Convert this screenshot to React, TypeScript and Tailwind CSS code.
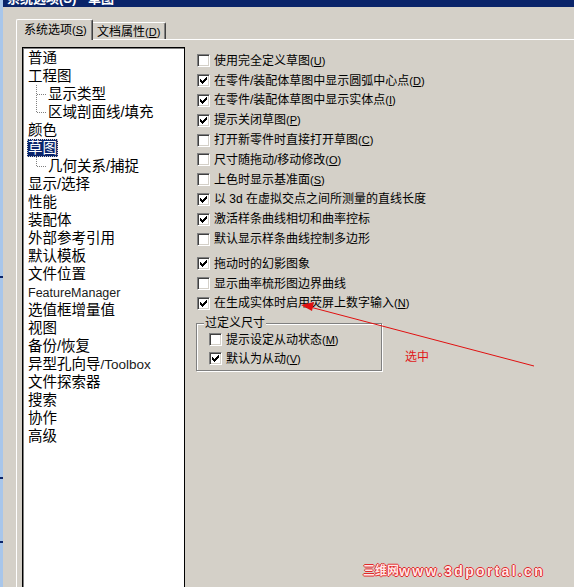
import React from 'react';

const FONT = "font-['Liberation_Sans','Noto_Sans_CJK_SC',sans-serif]";

type TreeItem = { label: string; child?: 'mid' | 'last'; selected?: boolean; latin?: string };

const tree: TreeItem[] = [
  { label: '普通' },
  { label: '工程图' },
  { label: '显示类型', child: 'mid' },
  { label: '区域剖面线/填充', child: 'last' },
  { label: '颜色' },
  { label: '草图', selected: true },
  { label: '几何关系/捕捉', child: 'last' },
  { label: '显示/选择' },
  { label: '性能' },
  { label: '装配体' },
  { label: '外部参考引用' },
  { label: '默认模板' },
  { label: '文件位置' },
  { label: '', latin: 'FeatureManager' },
  { label: '选值框增量值' },
  { label: '视图' },
  { label: '备份/恢复' },
  { label: '异型孔向导', latin: '/Toolbox' },
  { label: '文件探索器' },
  { label: '搜索' },
  { label: '协作' },
  { label: '高级' },
];

type Opt = { t: string; k?: string; c: boolean };

const opts: Opt[] = [
  { t: '使用完全定义草图', k: 'U', c: false },
  { t: '在零件/装配体草图中显示圆弧中心点', k: 'D', c: true },
  { t: '在零件/装配体草图中显示实体点', k: 'I', c: true },
  { t: '提示关闭草图', k: 'P', c: true },
  { t: '打开新零件时直接打开草图', k: 'C', c: false },
  { t: '尺寸随拖动/移动修改', k: 'O', c: false },
  { t: '上色时显示基准面', k: 'S', c: false },
  { t: '以 3d 在虚拟交点之间所测量的直线长度', c: true },
  { t: '激活样条曲线相切和曲率控标', c: true },
  { t: '默认显示样条曲线控制多边形', c: false },
];

const opts2: Opt[] = [
  { t: '拖动时的幻影图象', c: true },
  { t: '显示曲率梳形图边界曲线', c: false },
  { t: '在生成实体时启用荧屏上数字输入', k: 'N', c: true },
];

// classic 7x7 pixel check mark
const tick = [
  [6, 0, 1], [5, 1, 2], [0, 2, 1], [4, 2, 3], [0, 3, 2], [3, 3, 3], [0, 4, 5], [1, 5, 3], [2, 6, 1],
];

function CheckBox({ checked }: { checked: boolean }) {
  return (
    <span className="flex h-[13px] w-[13px] shrink-0 items-center justify-center border border-t-[#808080] border-l-[#808080] border-r-white border-b-white bg-white shadow-[inset_1px_1px_0_#404040,inset_-1px_-1px_0_#d4d0c8]">
      {checked && (
        <svg width="7" height="7" viewBox="0 0 7 7" shapeRendering="crispEdges">
          {tick.map(([x, y, w]) => (
            <rect key={`${x}-${y}`} x={x} y={y} width={w} height={1} fill="#000" />
          ))}
        </svg>
      )}
    </span>
  );
}

function Label({ t, k }: { t: string; k?: string }) {
  return (
    <span className="whitespace-nowrap text-[12px] leading-[14px] text-black">
      {t}
      {k && (
        <span className="text-[11px]">
          (<span className="underline underline-offset-1">{k}</span>)
        </span>
      )}
    </span>
  );
}

function OptRow({ o }: { o: Opt }) {
  return (
    <div className="flex h-[19.8px] items-center gap-[4px]">
      <CheckBox checked={o.c} />
      <Label t={o.t} k={o.k} />
    </div>
  );
}

function TreeRow({ item }: { item: TreeItem }) {
  const text = (
    <span
      className={`px-px leading-[18px] ${
        item.selected ? 'bg-[#0a246a] text-white outline-1 outline-dotted outline-[#d4d0c8] -outline-offset-1' : 'text-black'
      }`}
    >
      {item.label}
      {item.latin && (
        <span className={item.label ? 'text-[13.5px] text-[#1a1a1a]' : 'text-[12.5px] text-[#1a1a1a]'}>
          {item.latin}
        </span>
      )}
    </span>
  );
  if (item.child) {
    return (
      <div className="flex h-[18px] items-center pl-[12px]">
        <svg width="11" height="18" viewBox="0 0 11 18" className="shrink-0">
          <line
            x1="0.5"
            y1="0"
            x2="0.5"
            y2={item.child === 'mid' ? 18 : 9}
            stroke="#808080"
            strokeDasharray="1 1"
          />
          <line x1="1" y1="9.5" x2="10" y2="9.5" stroke="#808080" strokeDasharray="1 1" />
        </svg>
        {text}
      </div>
    );
  }
  return <div className="flex h-[18px] items-center pl-[3px]">{text}</div>;
}

export default function App() {
  return (
    <div className={`relative flex h-[587px] w-[574px] overflow-hidden bg-[#d4d0c8] ${FONT}`}>
      {/* strip of the window behind */}
      <div className="relative h-full w-[3px] shrink-0 bg-[#a8c6ea]">
        <div className="absolute left-0 top-[276px] h-[2px] w-[3px] bg-[#0a246a]" />
        <div className="absolute left-0 top-[477px] h-[2px] w-[3px] bg-[#0a246a]" />
        <div className="absolute left-0 top-[541px] h-[2px] w-[3px] bg-[#0a246a]" />
      </div>

      <div className="flex min-w-0 flex-1 flex-col">
        {/* title bar, mostly cut off */}
        <div className="h-[7px] shrink-0 overflow-hidden bg-[#0a246a] pl-[4px]">
          <div className="-mt-[8px] whitespace-nowrap text-[13px] font-bold leading-[13px] text-white">
            系统选项(S) - 草图
          </div>
        </div>

        {/* tabs */}
        <div className="mt-[12px] flex h-[20px] shrink-0 items-end pl-[13px]">
          <div className="relative z-10 -mb-px flex h-[21px] w-[77px] items-start rounded-t-[2px] border-l border-t border-r border-l-white border-t-white border-r-[#404040] bg-[#d4d0c8] pl-[7px] pt-[3px] shadow-[inset_-1px_0_0_#808080]">
            <Label t="系统选项" k="S" />
          </div>
          <div className="flex h-[17px] w-[73px] items-start rounded-tr-[2px] border-t border-r border-t-white border-r-[#404040] pl-[4px] pt-[2px] shadow-[inset_-1px_0_0_#808080]">
            <Label t="文档属性" k="D" />
          </div>
        </div>

        {/* tab sheet */}
        <div className="ml-[13px] flex flex-1 border-l border-t border-white pl-[5px] pt-[7px]">
          {/* tree list */}
          <div className="h-[560px] w-[163px] shrink-0 border border-black bg-white pt-px shadow-[inset_1px_1px_0_#808080]">
            <div className="pl-px text-[14.5px]">
              {tree.map((item, i) => (
                <TreeRow key={i} item={item} />
              ))}
            </div>
          </div>

          {/* options */}
          <div className="ml-[12px] flex flex-col pt-[4px]">
            {opts.map((o) => (
              <OptRow key={o.t} o={o} />
            ))}
            <div className="mt-[5px]">
              {opts2.map((o) => (
                <OptRow key={o.t} o={o} />
              ))}
            </div>

            <fieldset className="-ml-px mt-[3px] w-[186px] border border-[#808080] pb-[2px] shadow-[1px_1px_0_#fff,inset_1px_1px_0_#fff]">
              <legend className="ml-[7px] bg-[#d4d0c8] px-px text-[12px] leading-[14px] text-black">
                过定义尺寸
              </legend>
              <div className="pl-[12px]">
                <div className="flex h-[19px] items-center gap-[4px]">
                  <CheckBox checked={false} />
                  <Label t="提示设定从动状态" k="M" />
                </div>
                <div className="flex h-[19px] items-center gap-[4px]">
                  <CheckBox checked />
                  <Label t="默认为从动" k="V" />
                </div>
              </div>
            </fieldset>
          </div>
        </div>
      </div>

      {/* red annotation drawn over the dialog */}
      <svg className="pointer-events-none absolute left-0 top-0" width="574" height="587" viewBox="0 0 574 587">
        <line x1="534" y1="366" x2="310" y2="307" stroke="#e01010" strokeWidth="1" />
        <polygon points="301,305 314,302 312,311" fill="#e01010" />
      </svg>
      <div className="absolute left-[405px] top-[350px] text-[12px] leading-[14px] text-[#e01818]">选中</div>

      {/* site watermark */}
      <div className="absolute left-[363px] top-[563px] flex items-center whitespace-nowrap font-bold leading-[16px] text-[#ffe8e8] [text-shadow:1px_0_0_#e02828,-1px_0_0_#e02828,0_1px_0_#e02828,0_-1px_0_#e02828]">
        <span className="text-[12px]">三维网</span>
        <span className="text-[14px] tracking-[2.3px]">www.3dportal.cn</span>
      </div>
    </div>
  );
}
